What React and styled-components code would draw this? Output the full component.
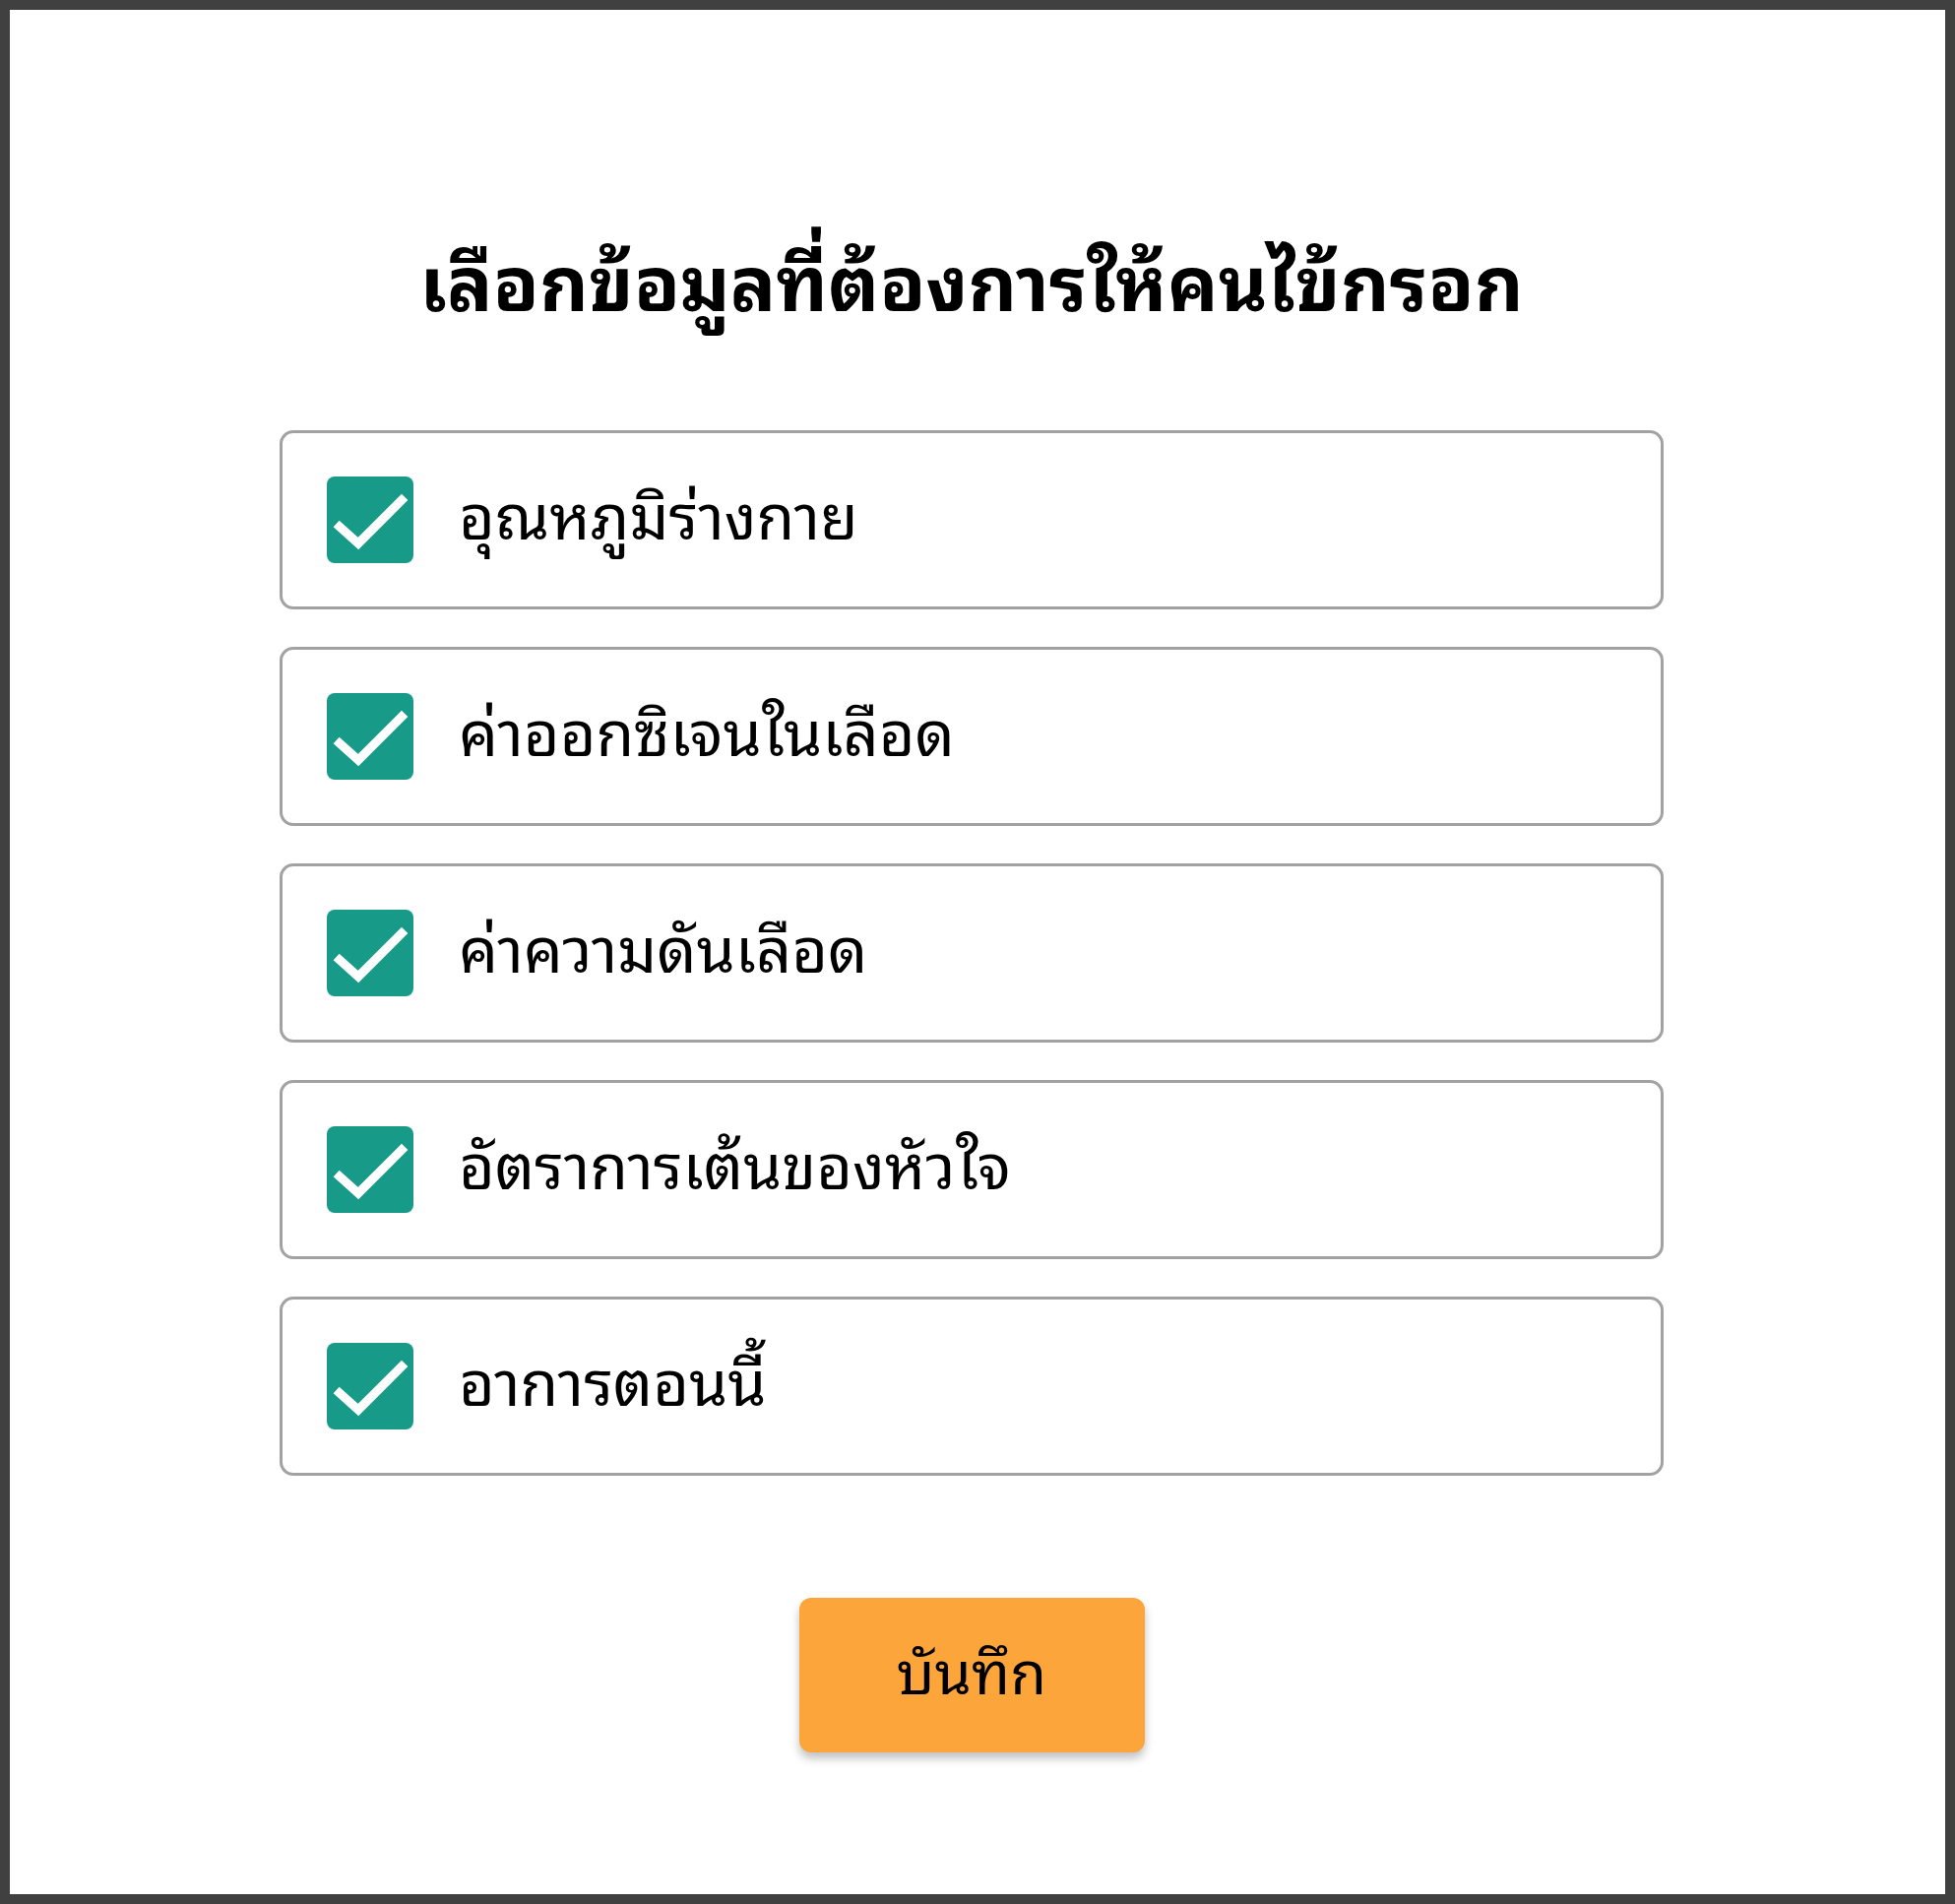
import React from "react";
import styled, { createGlobalStyle } from "styled-components";

const Global = createGlobalStyle`
  html, body { margin: 0; padding: 0; background: #fff; }
  * { box-sizing: border-box; }
`;

const Frame = styled.div`
  width: 1986px;
  height: 1934px;
  border: 10px solid #404040;
  background: #fff;
  display: flex;
  flex-direction: column;
  align-items: center;
  padding: 217px 12px 0 0;
  font-family: "Noto Sans Thai Looped", "Noto Sans Thai", "DejaVu Sans", sans-serif;
  color: #000;
`;

const Title = styled.h1`
  margin: 0;
  font-size: 77px;
  font-weight: 700;
  line-height: 110px;
  height: 110px;
  text-align: center;
  white-space: nowrap;
`;

const List = styled.div`
  margin-top: 100px;
  width: 1406px;
  display: flex;
  flex-direction: column;
  gap: 38px;
`;

const Row = styled.label`
  height: 182px;
  border: 3px solid #a2a2a2;
  border-radius: 14px;
  display: flex;
  align-items: center;
  padding-left: 45px;
  gap: 46px;
  cursor: pointer;
`;

const Box = styled.span`
  width: 88px;
  height: 88px;
  border-radius: 8px;
  background: ${(p) => (p.checked ? "#179a88" : "#fff")};
  display: flex;
  align-items: center;
  justify-content: center;
  flex: none;
`;

const Label = styled.span`
  font-size: 63px;
  font-weight: 400;
  line-height: 1.2;
  padding-bottom: 16px;
`;

const SaveButton = styled.button`
  margin-top: 124px;
  width: 351px;
  height: 157px;
  border: none;
  border-radius: 12px;
  background: #fca53a;
  box-shadow: 0 6px 10px rgba(0, 0, 0, 0.25);
  font-family: inherit;
  font-size: 60px;
  line-height: 1.2;
  padding: 0 0 16px;
  color: #000;
  cursor: pointer;
`;

const Check = () => (
  <svg width="88" height="88" viewBox="0 0 88 88">
    <path d="M13 51 L32 68 L76 24" fill="none" stroke="#fff" strokeWidth="9" strokeLinecap="square" strokeLinejoin="miter" />
  </svg>
);

const items = [
  "อุณหภูมิร่างกาย",
  "ค่าออกซิเจนในเลือด",
  "ค่าความดันเลือด",
  "อัตราการเต้นของหัวใจ",
  "อาการตอนนี้",
];

export default function App() {
  return (
    <>
      <Global />
      <Frame>
        <Title>เลือกข้อมูลที่ต้องการให้คนไข้กรอก</Title>
        <List>
          {items.map((t) => (
            <Row key={t}>
              <Box checked>
                <Check />
              </Box>
              <Label>{t}</Label>
            </Row>
          ))}
        </List>
        <SaveButton>บันทึก</SaveButton>
      </Frame>
    </>
  );
}
